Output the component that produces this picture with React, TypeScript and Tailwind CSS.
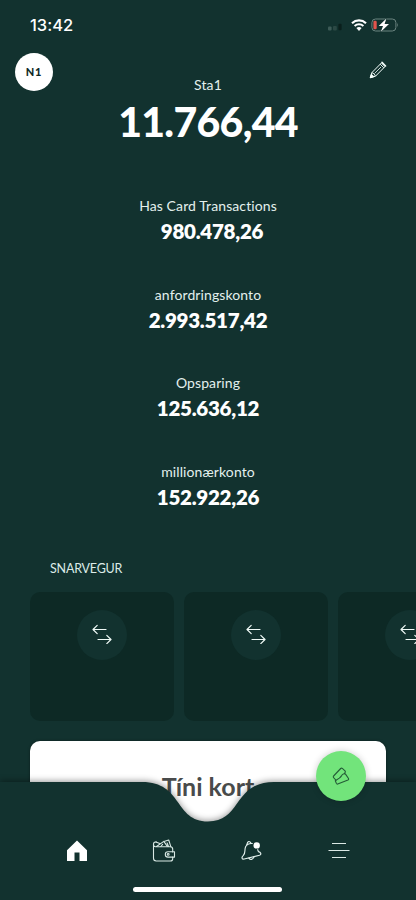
import React from "react";

type Account = { name: string; amount: string; shift?: string };

const accounts: Account[] = [
  { name: "Has Card Transactions", amount: "980.478,26", shift: "pl-2" },
  { name: "anfordringskonto", amount: "2.993.517,42" },
  { name: "Opsparing", amount: "125.636,12" },
  { name: "millionærkonto", amount: "152.922,26" },
];

function StatusBar() {
  return (
    <div className="flex h-[50px] items-center justify-between pr-[17px] pl-[30px]">
      <span className="font-['Inter',sans-serif] text-[16.5px] leading-5 font-medium">13:42</span>
      <div className="flex items-center">
        <svg width="15" height="8" viewBox="0 0 15 8" className="mt-1 mr-[8px]">
          <rect x="0" y="3.5" width="3.6" height="4" rx="1" fill="#3d5b57" />
          <rect x="5" y="3" width="3.8" height="4.5" rx="1" fill="#2b4844" />
          <rect x="10.4" y="0.8" width="3.2" height="6.4" rx="1" fill="#0a1f1c" />
        </svg>
        <svg width="16" height="12" viewBox="0 0 16 12" fill="none" stroke="#fff" className="mr-1">
          <path d="M1 4.2A10.2 10.2 0 0 1 15 4.2" strokeWidth="2.2" />
          <path d="M3.6 7A6.5 6.5 0 0 1 12.4 7" strokeWidth="2" />
          <path d="M5.4 9.1Q8 7 10.6 9.1L8 12Z" fill="#fff" stroke="none" />
        </svg>
        <svg width="28" height="14" viewBox="0 0 28 14">
          <rect x="0.9" y="1" width="24" height="12" rx="3.6" fill="none" stroke="#6b8480" />
          <path d="M26.2 4.8Q27.8 7 26.2 9.2Z" fill="#6b8480" />
          <rect x="2.4" y="2.8" width="3.3" height="8.4" rx="1.2" fill="#e2544c" />
          <path d="M15.4 0.4L7.7 7.9H12L9.9 13.8L18 6.1H13.6Z" fill="#fff" stroke="#12322f" strokeWidth="1" paintOrder="stroke" />
        </svg>
      </div>
    </div>
  );
}

function PencilIcon() {
  return (
    <svg width="18" height="18" viewBox="0 0 18 18" fill="none" stroke="#f5fffc" strokeWidth="1" strokeLinejoin="round">
      <path d="M1.4 16.6L2.9 11.6L12.4 2L16 5.6L6.5 15.2Z" />
      <path d="M5.6 12.4L12 6" strokeWidth="0.8" />
      <path d="M2.9 11.6Q5.6 12.2 6.5 15.2M11.2 3.2L14.8 6.8" strokeWidth="0.9" />
      <path d="M1.2 16.8L2.3 13.2L4.9 15.7Z" fill="#f5fffc" />
      <path d="M13 1.4L16.6 5" strokeWidth="1.5" strokeLinecap="round" />
    </svg>
  );
}

function Shortcut() {
  return (
    <div className="flex h-[129px] w-36 shrink-0 justify-center rounded-[10px] bg-[#0d2925] pt-[18px]">
      <div className="flex size-[50px] items-center justify-center rounded-full bg-[#12322f] pb-[3px]">
        <svg width="20" height="20" viewBox="0 0 20 20" fill="none" stroke="#f0faf7" strokeWidth="1.2" strokeLinecap="round" strokeLinejoin="round">
          <path d="M14 5.5H1M5.2 1.3L1 5.5L5.2 9.7" />
          <path d="M6 15.5H19M14.8 11.3L19 15.5L14.8 19.6" />
        </svg>
      </div>
    </div>
  );
}

function HomeIcon() {
  return (
    <svg width="22" height="22" viewBox="0 0 22 22" fill="#fff">
      <path d="M11 0.5L1 10.2V21H8.5V12.5H13.5V21H21V10.2Z" />
    </svg>
  );
}

function WalletIcon() {
  return (
    <svg width="24" height="24" viewBox="0 0 24 24" fill="none" stroke="#d8e8e4" strokeWidth="1.1" strokeLinecap="round" strokeLinejoin="round">
      <path d="M4.5 3H3.4Q1.5 3 1.5 5.2V19.3Q1.5 22 4.2 22H18.3Q20.7 22 20.7 19.7V18M20.7 13V10.2Q20.7 7.7 18.3 7.7H3.5Q1.5 7.7 1.5 5.2" />
      <path d="M4.5 7.5L11.8 2.4L15.3 7.4M3.9 3L8.4 4.7M12 2.5L16.7 1L18.8 7.6M10.6 5.4L8.8 7.5M15.1 4L16.5 7.5" />
      <path d="M22.5 12.7H16A2.7 2.7 0 0 0 16 18.1H22.5Z" />
      <circle cx="16.2" cy="15.4" r="0.9" />
    </svg>
  );
}

function BellIcon() {
  return (
    <svg width="22" height="22" viewBox="0 0 22 22" fill="none" stroke="#e3f1ee" strokeWidth="1.15" strokeLinecap="round" strokeLinejoin="round">
      <path d="M11.3 3.5Q6.6 3.1 4.7 6.6C3 10 5.1 13.2 2.2 15.6Q.5 17 1.2 18.5Q1.5 19.4 3.2 19L18.5 15.2Q20.2 14.7 19.7 13.2Q19.3 12 17.4 11.6L16.7 9.7" />
      <path d="M5.7 5L6.7 2.3Q7.8.8 9.2 2.1L10.2 3.5M7.8 18.1Q10.5 21.4 13.2 16.7" />
      <circle cx="15.7" cy="5.4" r="3.2" fill="#fff" stroke="none" />
    </svg>
  );
}

function MenuIcon() {
  return (
    <svg width="22" height="18" viewBox="0 0 22 18" stroke="#dbe8e5" strokeWidth="1.1">
      <path d="M4 1.5H18M0.5 8.5H21.5M4 15.5H18" />
    </svg>
  );
}

function CardsIcon() {
  return (
    <svg width="18" height="18" viewBox="0 0 18 18" fill="none" stroke="#245b37" strokeWidth="1.1" strokeLinejoin="round" strokeLinecap="round">
      <path d="M3.8 13L1.6 10.6Q1 9.8 1.6 9L8.7 1.5Q9.5.7 10.3 1.4L13 3.9Q13.6 4.6 13.1 5.4L12.5 6.6" />
      <path d="M3.3 13.7L7.3 11.1Q8.7 10 9.6 8.6Q10.5 7 12 6.7Q13 6.5 13.7 7.4L16.5 11.5Q17 12.5 16 13L5.7 17Q4.8 17.3 4.4 16.4Z" />
    </svg>
  );
}

export default function App() {
  return (
    <main className="relative h-[900px] w-[416px] overflow-hidden bg-[#12322f] font-['Lato',sans-serif] text-white [font-variant-ligatures:none]">
      <StatusBar />
      <header className="flex h-24 items-start justify-between pr-[29px] pl-[15px]">
        <div className="mt-[3px] flex w-[59px] justify-start">
          <div className="flex size-[38px] items-center justify-center rounded-full bg-white text-[11px] font-black tracking-[0.7px] text-[#102a27]">N1</div>
        </div>
        <div className="flex flex-col items-center pt-[25px]">
          <h2 className="text-sm leading-5 tracking-[0.2px] text-[#e3f0ed]">Sta1</h2>
          <strong className="text-[41px] leading-[54px] font-black tracking-[-0.7px] whitespace-nowrap">11.766,44</strong>
        </div>
        <div className="mt-[11px] flex w-[45px] justify-end"><PencilIcon /></div>
      </header>

      <section className="flex h-[366px] flex-col justify-between pt-[50px]">
        {accounts.map(({ name, amount, shift }) => (
          <div key={name} className="flex h-[50px] flex-col items-center">
            <span className="text-sm leading-[19px] tracking-[0.1px] text-[#e3f0ed]">{name}</span>
            <strong className={`mt-[3px] text-[20.5px] leading-[26px] font-extrabold tracking-[-0.26px] ${shift ?? ""}`}>{amount}</strong>
          </div>
        ))}
      </section>

      <section className="pt-[47px]">
        <h3 className="pl-[50px] text-[12.5px] leading-5 tracking-[-0.2px] text-[#dcebe7]">SNARVEGUR</h3>
        <div className="mt-[13px] flex gap-2.5 pl-[30px]">
          <Shortcut />
          <Shortcut />
          <Shortcut />
        </div>
      </section>

      <section className="mx-[30px] mt-5 h-40 rounded-[10px] bg-white pt-[29px] text-center text-[#494b4b] shadow-[0_0_3px_rgba(0,0,0,0.4)]">
        <h3 className="text-[25px] leading-8 font-bold">Tíni kort</h3>
      </section>

      <nav className="absolute inset-x-0 bottom-0 h-[118px]">
        <svg width="416" height="118" viewBox="0 0 416 118" className="absolute inset-0 overflow-visible drop-shadow-[0_-1px_3px_rgba(0,0,0,0.4)]">
          <path d="M0 0H142C183 0 174 39.5 208 39.5C242 39.5 233 0 274 0H416V118H0Z" fill="#12322f" />
        </svg>
        <div className="relative grid grid-cols-4 items-center px-[33px] pt-[57px]">
          <div className="flex h-6 items-center justify-center"><HomeIcon /></div>
          <div className="flex h-6 items-center justify-center"><WalletIcon /></div>
          <div className="flex h-6 items-center justify-center"><BellIcon /></div>
          <div className="flex h-6 items-center justify-center"><MenuIcon /></div>
        </div>
        <div className="relative mt-6 ml-[133px] h-[5px] w-[149px] rounded-full bg-white" />
      </nav>
      <button className="absolute top-[751px] left-[316px] flex size-[50px] items-center justify-center rounded-full bg-[#72e47b] shadow-[0_0_7px_rgba(0,0,0,0.2)]">
        <CardsIcon />
      </button>
    </main>
  );
}
